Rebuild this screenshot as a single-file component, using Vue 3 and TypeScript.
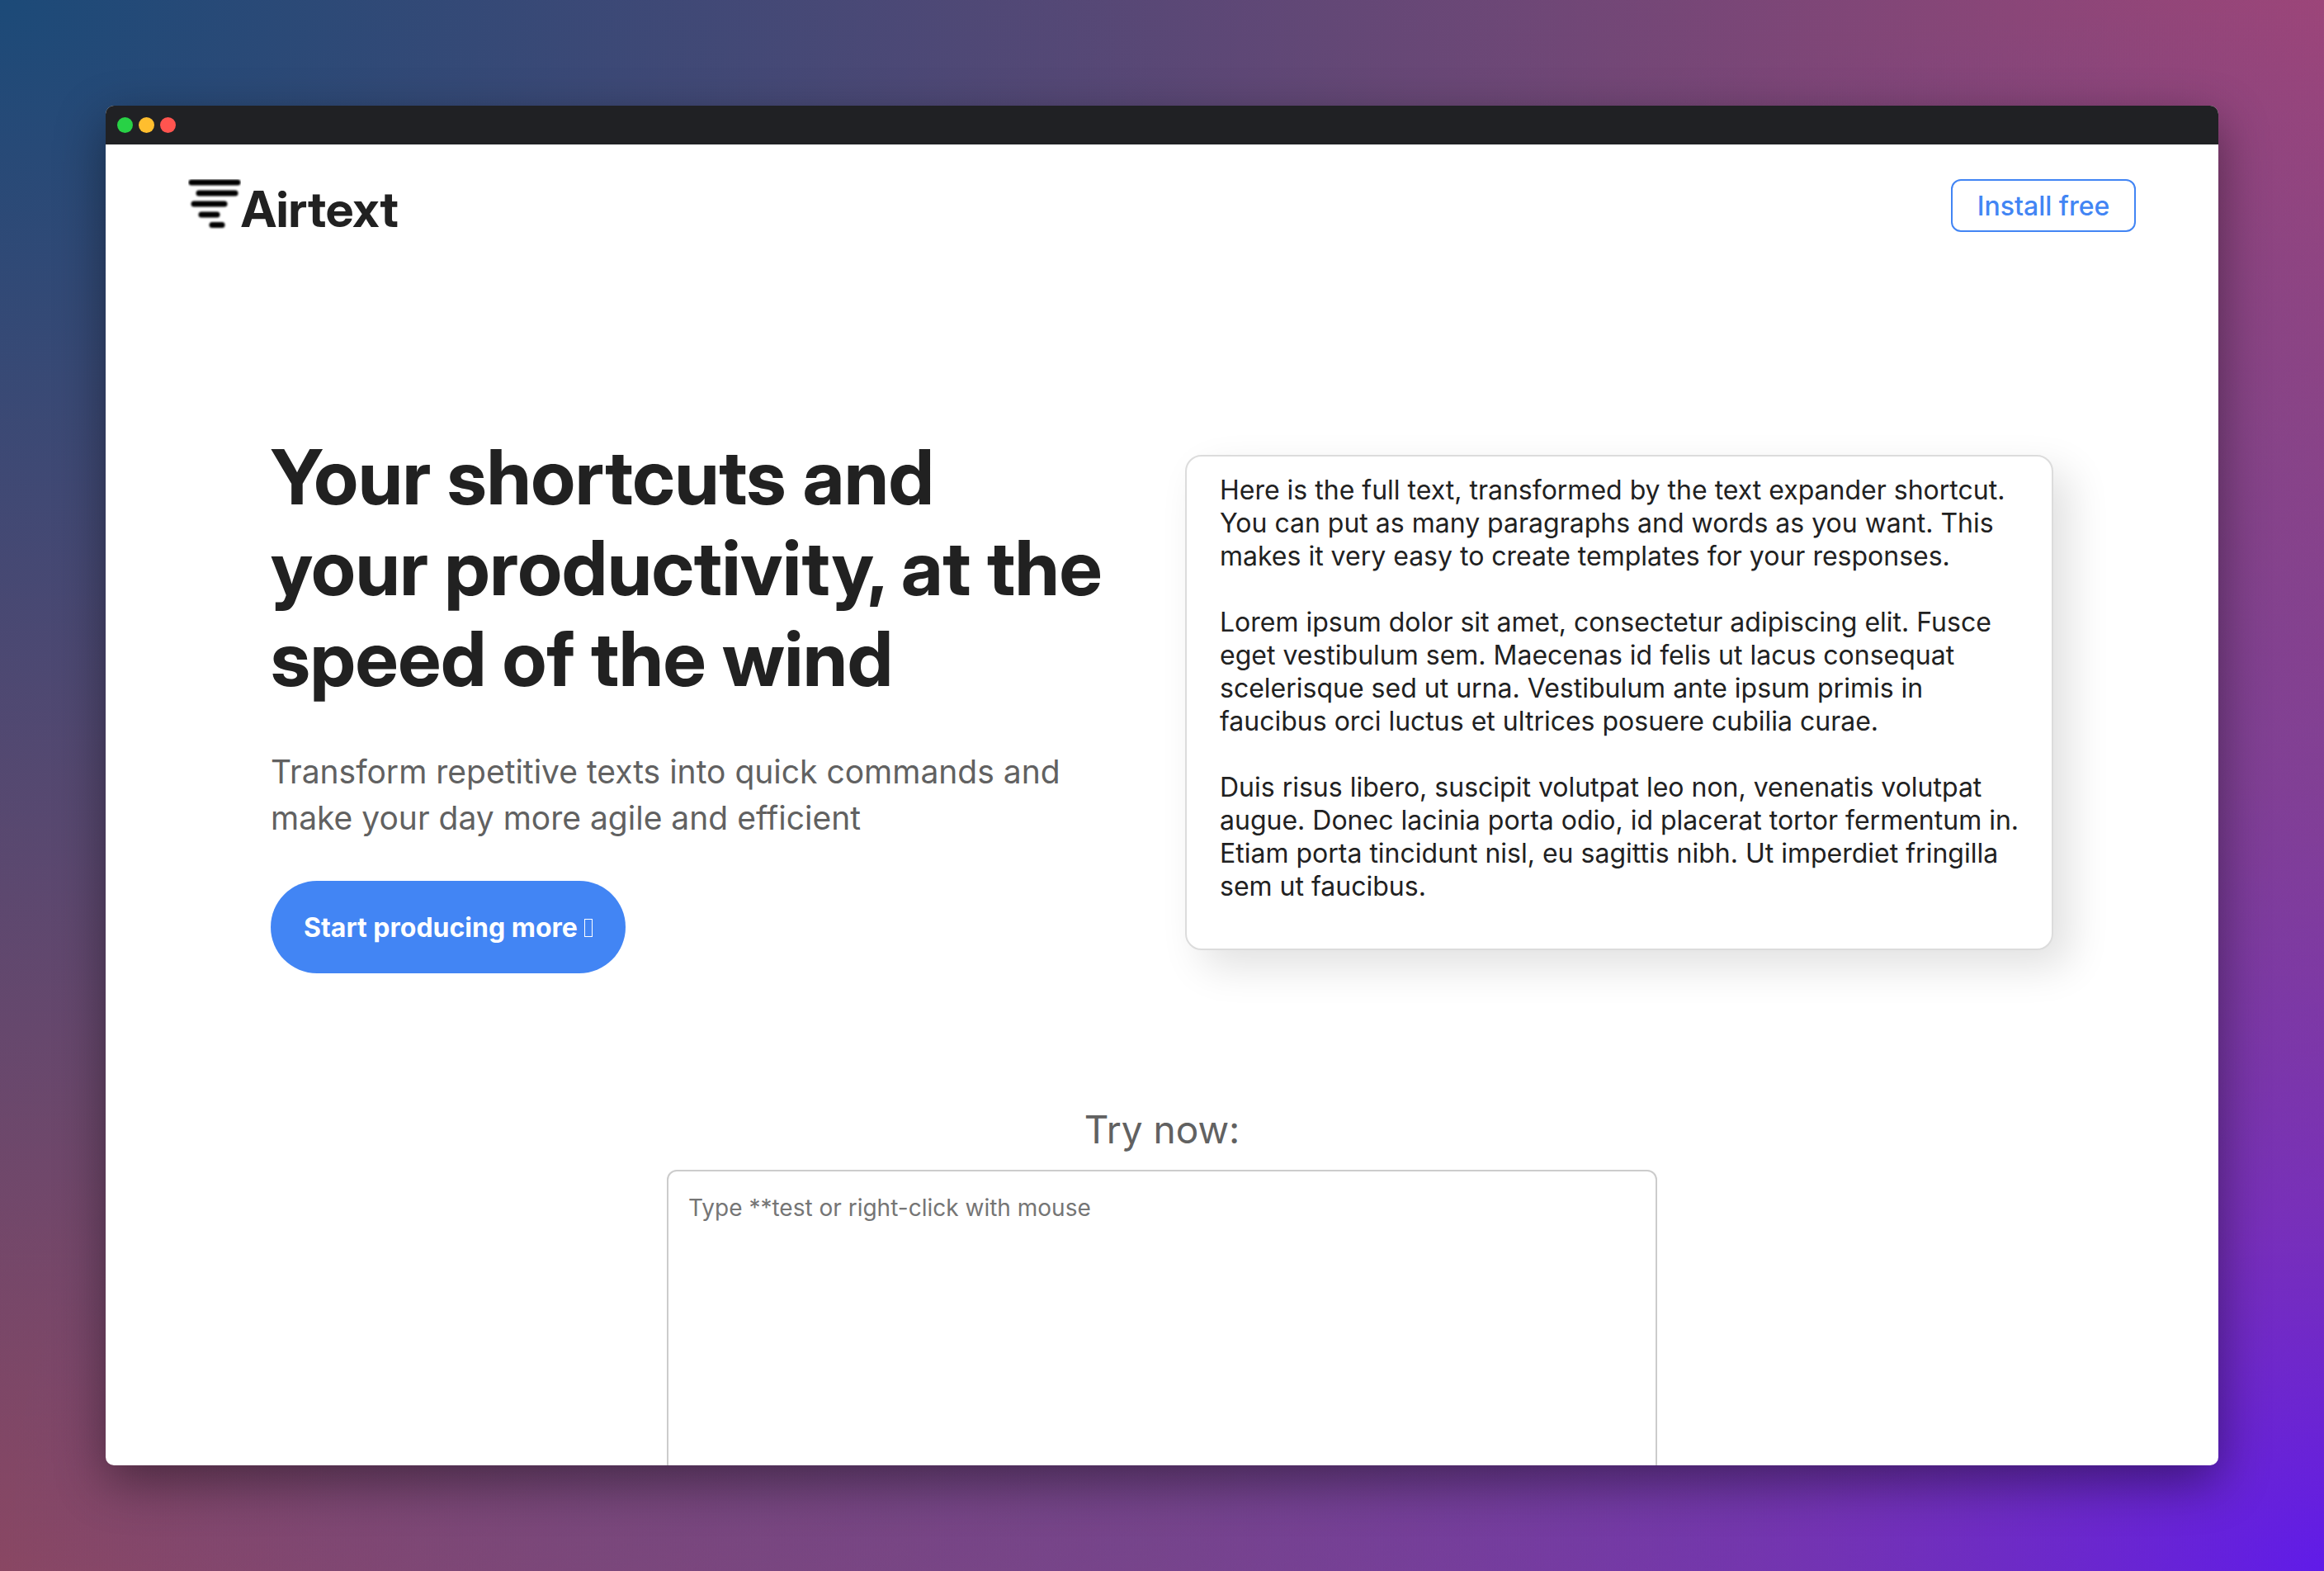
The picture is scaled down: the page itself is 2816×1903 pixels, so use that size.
<script setup lang="ts">
const paragraphs: string[] = [
  'Here is the full text, transformed by the text expander shortcut. You can put as many paragraphs and words as you want. This makes it very easy to create templates for your responses.',
  'Lorem ipsum dolor sit amet, consectetur adipiscing elit. Fusce eget vestibulum sem. Maecenas id felis ut lacus consequat scelerisque sed ut urna. Vestibulum ante ipsum primis in faucibus orci luctus et ultrices posuere cubilia curae.',
  'Duis risus libero, suscipit volutpat leo non, venenatis volutpat augue. Donec lacinia porta odio, id placerat tortor fermentum in. Etiam porta tincidunt nisl, eu sagittis nibh. Ut imperdiet fringilla sem ut faucibus.',
]
</script>

<template>
  <div class="backdrop">
    <div class="window">
      <div class="titlebar">
        <span class="light green"></span>
        <span class="light yellow"></span>
        <span class="light red"></span>
      </div>
      <div class="page">
        <header class="header">
          <a class="brand" href="#">
            <svg class="logo" width="64" height="64" viewBox="0 0 64 64" aria-hidden="true">
              <defs>
                <filter id="soft" filterUnits="userSpaceOnUse" x="0" y="0" width="64" height="64">
                  <feGaussianBlur stdDeviation="0.8" />
                </filter>
              </defs>
              <g stroke="#000" stroke-width="7" stroke-linecap="round" filter="url(#soft)">
                <path d="M4 4H60" />
                <path d="M13 17H57" />
                <path d="M7 30H44" />
                <path d="M16 43H35" />
                <path d="M29 55.5H41" />
              </g>
            </svg>
            <span>Airtext</span>
          </a>
          <button class="install" type="button">Install free</button>
        </header>

        <main>
          <section class="hero">
            <div class="pitch">
              <h1>Your shortcuts and<br />your productivity, at the<br />speed of the wind</h1>
              <p class="lead">Transform repetitive texts into quick commands and make your day more agile and efficient</p>
              <button class="start" type="button">Start producing more <span class="box"></span></button>
            </div>
            <div class="demo">
              <p v-for="text in paragraphs" :key="text">{{ text }}</p>
            </div>
          </section>

          <section class="try">
            <label for="playground">Try now:</label>
            <textarea id="playground" placeholder="Type **test or right-click with mouse"></textarea>
          </section>
        </main>
      </div>
    </div>
  </div>
</template>

<style>
body {
  margin: 0;
}
</style>

<style scoped>
* {
  box-sizing: border-box;
}

.backdrop {
  display: flex;
  height: 100vh;
  padding: 128px;
  background:
    radial-gradient(
      ellipse 50% 60% at 50% 100%,
      rgba(86, 89, 138, 0.32),
      rgba(86, 89, 138, 0.24) 50%,
      rgba(86, 89, 138, 0)
    ),
    radial-gradient(
      ellipse 50% 50% at 100% 50%,
      rgba(86, 89, 150, 0.2),
      rgba(86, 89, 150, 0.14) 50%,
      rgba(86, 89, 150, 0)
    ),
    radial-gradient(ellipse 125% 125% at top left, #1c4a78, rgba(28, 74, 120, 0)),
    radial-gradient(
      ellipse 100% 100% at bottom right,
      #601be9,
      rgba(96, 27, 233, 0.66) 22%,
      rgba(96, 27, 233, 0.32) 50%,
      rgba(96, 27, 233, 0.14) 75%,
      rgba(96, 27, 233, 0)
    ),
    linear-gradient(to top right, #a5465e, #bc447a);
  font-family: Inter, sans-serif;
  color: #212121;
}

.window {
  display: flex;
  flex: 1;
  flex-direction: column;
  min-width: 0;
  overflow: hidden;
  border-radius: 10px;
  background: #fff;
  box-shadow: 0 20px 60px rgba(0, 0, 0, 0.42);
}

.titlebar {
  display: flex;
  flex: none;
  align-items: center;
  gap: 7px;
  height: 47px;
  padding: 0 14px;
  background: #202124;
}

.light {
  width: 19px;
  height: 19px;
  border-radius: 50%;
}

.green {
  background: #28d146;
}

.yellow {
  background: #ffbe2e;
}

.red {
  background: #ff544f;
}

.page {
  flex: 1;
  min-height: 0;
  overflow: hidden;
}

.header {
  display: flex;
  align-items: flex-start;
  justify-content: space-between;
  height: 148px;
  padding: 42px 100px;
}

.brand {
  display: flex;
  align-items: center;
  color: inherit;
  font-family: 'Inter Display', Inter, sans-serif;
  font-size: 60px;
  font-weight: 700;
  line-height: 72px;
  text-decoration: none;
}

.logo {
  margin-bottom: 8px;
}

.install {
  width: 224px;
  height: 64px;
  padding: 2px 0 0;
  border: 2px solid #4285f4;
  border-radius: 12px;
  background: #fff;
  color: #4285f4;
  font: 500 32px/40px Inter, sans-serif;
}

.hero {
  display: flex;
  align-items: center;
  justify-content: space-between;
  padding: 200px 200px 0;
}

.pitch {
  width: 1060px;
}

h1 {
  margin: 0;
  font-family: 'Inter Display', Inter, sans-serif;
  font-size: 92px;
  font-weight: 700;
  line-height: 110px;
}

.lead {
  margin: 54px 0 48px;
  color: #616161;
  font-size: 39px;
  line-height: 56px;
}

.start {
  display: inline-flex;
  align-items: center;
  gap: 8px;
  height: 112px;
  padding: 2px 40px 0;
  border: 0;
  border-radius: 56px;
  background: #4285f4;
  color: #fff;
  font: 700 32px/40px Inter, sans-serif;
}

.box {
  width: 10px;
  height: 22px;
  border: 1px solid #fff;
}

.demo {
  width: 1052px;
  height: 600px;
  padding: 21px 24px 20px 40px;
  border: 2px solid #dcdcdc;
  border-radius: 20px;
  background: #fff;
  box-shadow: 20px 20px 50px rgba(0, 0, 0, 0.12);
  font-size: 32px;
  line-height: 40px;
}

.demo p {
  margin: 0 0 40px;
}

.try {
  display: flex;
  flex-direction: column;
  align-items: center;
  padding-top: 160px;
}

label {
  color: #616161;
  font-size: 46px;
  line-height: 58px;
}

textarea {
  width: 1200px;
  height: 600px;
  margin-top: 20px;
  padding: 24px;
  border: 2px solid #ccc;
  border-radius: 12px;
  background: #fff;
  font: 400 28px/40px Inter, sans-serif;
  resize: none;
}

textarea::placeholder {
  color: #757575;
}
</style>
